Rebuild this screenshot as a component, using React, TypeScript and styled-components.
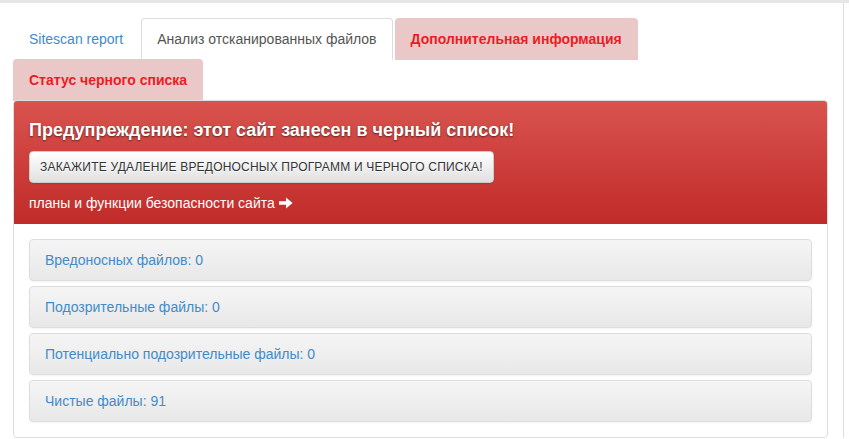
import styled, { createGlobalStyle } from "styled-components";

const GlobalStyle = createGlobalStyle`
  html, body {
    margin: 0;
    padding: 0;
    background: #fff;
  }
  body {
    font-family: "Liberation Sans", Arial, Helvetica, sans-serif;
    font-size: 14px;
    line-height: 20px;
    color: #333;
  }
  * {
    box-sizing: border-box;
  }
`;

const tabs = [
  { label: "Sitescan report", kind: "link" },
  { label: "Анализ отсканированных файлов", kind: "active" },
  { label: "Дополнительная информация", kind: "danger" },
  { label: "Статус черного списка", kind: "danger" },
] as const;

const counters = [
  "Вредоносных файлов: 0",
  "Подозрительные файлы: 0",
  "Потенциально подозрительные файлы: 0",
  "Чистые файлы: 91",
];

export default function App() {
  return (
    <>
      <GlobalStyle />
      <TopStrip />
      <Page>
        <TabList>
          {tabs.map((t) => (
            <Tab key={t.label} $kind={t.kind}>
              {t.label}
            </Tab>
          ))}
        </TabList>

        <Panel>
          <WarningHeading>
            <WarningTitle>Предупреждение: этот сайт занесен в черный список!</WarningTitle>
            <OrderButton>
              Закажите удаление вредоносных программ и черного списка!
            </OrderButton>
            <PlansLink>
              планы и функции безопасности сайта
              <svg width="14" height="12" viewBox="0 0 14 12" aria-hidden="true">
                <path d="M0 4.2h7V0.6L13.6 6 7 11.4V7.8H0z" fill="#fff" />
              </svg>
            </PlansLink>
          </WarningHeading>

          <PanelBody>
            {counters.map((c) => (
              <CounterRow key={c}>
                <CounterLink>{c}</CounterLink>
              </CounterRow>
            ))}
          </PanelBody>
        </Panel>
      </Page>
    </>
  );
}

const TopStrip = styled.div`
  height: 3px;
  background: #e6e6e6;
`;

const Page = styled.div`
  width: 844px;
  padding: 15px 15px 0 13px;
  border-right: 1px solid #dedede;
`;

const TabList = styled.ul`
  display: flex;
  flex-wrap: wrap;
  margin: 0;
  padding: 0;
  list-style: none;
`;

const Tab = styled.li<{ $kind: "link" | "active" | "danger" }>`
  margin: 0 2px -1px 0;
  padding: 10px 15px;
  border: 1px solid transparent;
  border-radius: 4px 4px 0 0;
  line-height: 20px;
  cursor: pointer;
  color: ${(p) =>
    p.$kind === "link" ? "#428bca" : p.$kind === "active" ? "#555" : "#ee1b24"};
  font-weight: ${(p) => (p.$kind === "danger" ? 700 : 400)};
  background: ${(p) =>
    p.$kind === "active" ? "#fff" : p.$kind === "danger" ? "#ebc8c8" : "transparent"};
  ${(p) =>
    p.$kind === "active" &&
    `
    border-color: #ddd #ddd transparent;
  `}
`;

const Panel = styled.div`
  position: relative;
  border: 1px solid #ddd;
  border-radius: 4px;
  overflow: hidden;
  background: #fff;
`;

const WarningHeading = styled.div`
  padding: 10px 15px 11px;
  color: #fff;
  background: linear-gradient(to bottom, #d9534f 0%, #c02b28 100%);
`;

const WarningTitle = styled.h4`
  margin: 9px 0 11px;
  font-size: 18px;
  font-weight: 700;
  line-height: 20px;
  color: #fff;
  text-shadow: 0 1px 2px rgba(0, 0, 0, 0.55);
`;

const OrderButton = styled.button`
  display: inline-block;
  height: 32px;
  padding: 6px 10px;
  font-family: inherit;
  font-size: 12px;
  line-height: 18px;
  letter-spacing: 0.2px;
  text-transform: uppercase;
  color: #333;
  background: linear-gradient(to bottom, #fff 0%, #e0e0e0 100%);
  border: 1px solid #ccc;
  border-radius: 4px;
  box-shadow: 0 1px 1px rgba(0, 0, 0, 0.1);
  text-shadow: 0 1px 0 #fff;
  cursor: pointer;
`;

const PlansLink = styled.p`
  display: flex;
  align-items: center;
  gap: 4px;
  margin: 10px 0 0;
  color: #fff;
  line-height: 20px;
  cursor: pointer;
`;

const PanelBody = styled.div`
  display: flex;
  flex-direction: column;
  gap: 5px;
  padding: 15px;
`;

const CounterRow = styled.div`
  padding: 10px 15px;
  border: 1px solid #ddd;
  border-radius: 4px;
  background: linear-gradient(to bottom, #f5f5f5 0%, #e8e8e8 100%);
  box-shadow: 0 1px 2px rgba(0, 0, 0, 0.05);
`;

const CounterLink = styled.span`
  color: #428bca;
  line-height: 20px;
  cursor: pointer;
`;
